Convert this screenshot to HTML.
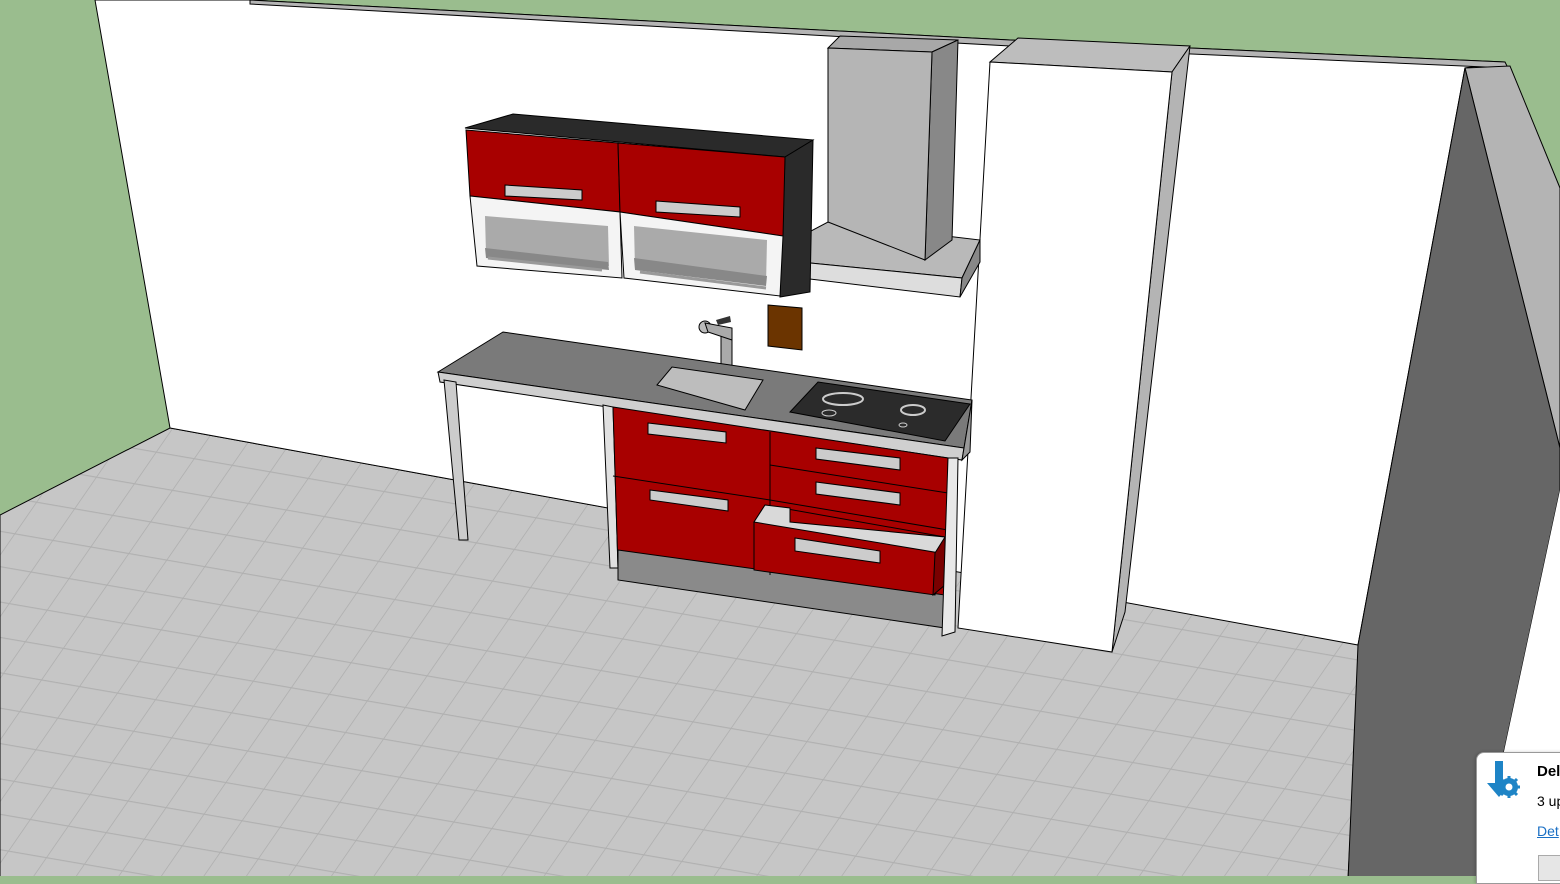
<!DOCTYPE html>
<html><head><meta charset="utf-8"><style>
html,body{margin:0;padding:0;width:1560px;height:876px;overflow:hidden;background:#9abd8e;font-family:"Liberation Sans",sans-serif}
svg{position:absolute;left:0;top:0}
.card{position:absolute;left:1476px;top:752px;width:100px;height:130px;background:#fff;border:1px solid #999;border-radius:8px 0 0 0;box-shadow:-1px 0 3px rgba(0,0,0,.2)}
</style></head><body>
<svg width="1560" height="876" viewBox="0 0 1560 876">
<defs>
<pattern id="tiles" width="42" height="32" patternUnits="userSpaceOnUse" patternTransform="skewX(-28) rotate(9)">
<rect width="42" height="32" fill="#c6c6c6"/>
<path d="M0 0H42M0 0V32" stroke="#b0b0b0" stroke-width="2" fill="none"/>
</pattern>
</defs>
<polygon points="0,515 170,428 1360,645 1348,880 0,880" fill="url(#tiles)" stroke="#000" stroke-width="1"/>
<polygon points="95,0 250,0 1010,40 1505,62 1465,68 1358,645 170,428" fill="#fff" stroke="#000" stroke-width="1"/>
<polygon points="250,0 1010,40 1505,62 1508,68 1010,46 250,4" fill="#b4b4b4" stroke="#000" stroke-width="1"/>
<polygon points="1465,68 1510,66 1560,188 1560,448" fill="#b4b4b4" stroke="#000" stroke-width="1"/>
<polygon points="1465,68 1560,448 1560,490 1500,770 1490,880 1348,880 1358,645" fill="#666" stroke="#000" stroke-width="1"/>
<polygon points="1560,490 1500,770 1490,880 1560,880" fill="#fff"/>
<!-- tall column -->
<polygon points="1018,38 1190,46 1172,72 990,62" fill="#bdbdbd" stroke="#000"/>
<polygon points="1172,72 1190,46 1125,612 1112,652" fill="#b4b4b4" stroke="#000"/>
<polygon points="990,62 1172,72 1112,652 958,628" fill="#fff" stroke="#000"/>
<!-- hood canopy -->
<polygon points="760,258 828,222 980,240 962,278" fill="#b9b9b9" stroke="#000"/>
<polygon points="760,258 962,278 960,297 760,273" fill="#ddd" stroke="#000"/>
<polygon points="962,278 980,240 980,262 960,297" fill="#888" stroke="#000"/>
<!-- chimney -->
<polygon points="840,36 958,40 932,52 828,48" fill="#a8a8a8" stroke="#000"/>
<polygon points="932,52 958,40 952,240 925,260" fill="#888" stroke="#000"/>
<polygon points="828,48 932,52 925,260 828,222" fill="#b5b5b5" stroke="#000"/>
<!-- upper cabinets -->
<polygon points="465,128 513,114 813,140 785,157" fill="#2a2a2a" stroke="#000"/>
<polygon points="785,157 813,140 810,292 780,297" fill="#2a2a2a" stroke="#000"/>
<polygon points="466,130 618,143 620,212 470,196" fill="#a80000" stroke="#000"/>
<polygon points="618,143 785,157 783,236 620,212" fill="#a80000" stroke="#000"/>
<polygon points="470,196 620,212 622,278 477,266" fill="#f4f4f4" stroke="#000"/>
<polygon points="620,212 783,236 780,296 624,278" fill="#f4f4f4" stroke="#000"/>
<polygon points="485,216 608,226 609,266 486,254" fill="#aaa"/>
<polygon points="634,226 767,240 766,285 635,268" fill="#aaa"/>
<polygon points="485,248 608,262 609,270 486,258" fill="#888"/>
<polygon points="634,258 767,276 766,286 635,270" fill="#888"/>
<polygon points="505,185 582,190 582,200 505,196" fill="#ccc" stroke="#000"/>
<polygon points="656,201 740,207 740,217 656,212" fill="#ccc" stroke="#000"/>
<line x1="488" y1="258" x2="602" y2="270" stroke="#999" stroke-width="3"/>
<line x1="640" y1="272" x2="766" y2="288" stroke="#999" stroke-width="3"/>
<polygon points="768,305 802,308 802,350 768,346" fill="#6b3400" stroke="#000"/>
<!-- faucet -->
<rect x="721" y="330" width="11" height="42" fill="#aaa" stroke="#000"/>
<circle cx="705" cy="327" r="6" fill="#bbb" stroke="#000"/>
<polygon points="705,323 732,328 732,340 708,332" fill="#aaa" stroke="#000"/>
<polygon points="716,320 730,316 731,322 718,325" fill="#333"/>
<!-- counter -->
<polygon points="438,372 503,332 972,400 964,448" fill="#7a7a7a" stroke="#000"/>
<polygon points="438,372 964,448 962,460 440,382" fill="#cfcfcf" stroke="#000"/>
<polygon points="964,448 972,400 970,452 962,460" fill="#999" stroke="#000"/>
<polygon points="657,385 672,367 763,380 745,410" fill="#bdbdbd" stroke="#000"/>
<polygon points="790,412 818,382 970,404 945,441" fill="#2b2b2b" stroke="#000"/>
<ellipse cx="843" cy="399" rx="20" ry="6" fill="none" stroke="#ccc" stroke-width="2"/>
<ellipse cx="913" cy="410" rx="12" ry="5" fill="none" stroke="#ccc" stroke-width="2"/>
<ellipse cx="829" cy="413" rx="7" ry="3" fill="none" stroke="#ccc"/>
<ellipse cx="903" cy="425" rx="4" ry="2" fill="none" stroke="#ccc"/>
<polygon points="444,380 456,382 468,540 459,540" fill="#ccc" stroke="#000"/>
<!-- base cabinet -->
<polygon points="603,405 613,407 618,568 610,568" fill="#e0e0e0" stroke="#000"/>
<polygon points="613,407 948,458 945,612 618,568" fill="#a80000" stroke="#000"/>
<polygon points="618,550 945,595 945,628 618,580" fill="#8a8a8a" stroke="#000"/>
<line x1="770" y1="432" x2="770" y2="575" stroke="#000"/>
<line x1="613" y1="476" x2="770" y2="500" stroke="#000"/>
<line x1="770" y1="465" x2="948" y2="493" stroke="#000"/>
<line x1="770" y1="500" x2="948" y2="530" stroke="#000"/>
<polygon points="754,522 765,505 945,537 935,595 754,570" fill="#a80000" stroke="#000"/>
<polygon points="754,522 765,505 790,508 790,522 945,537 940,553" fill="#d9d9d9" stroke="#000"/>
<polygon points="935,553 945,537 945,585 933,595" fill="#7a0000" stroke="#000"/>
<polygon points="648,423 726,432 726,443 648,434" fill="#ccc" stroke="#000"/>
<polygon points="650,490 728,500 728,511 650,500" fill="#ccc" stroke="#000"/>
<polygon points="816,448 900,458 900,470 816,459" fill="#ccc" stroke="#000"/>
<polygon points="816,482 900,493 900,505 816,494" fill="#ccc" stroke="#000"/>
<polygon points="795,538 880,551 880,563 795,551" fill="#ccc" stroke="#000"/>
<polygon points="948,458 958,458 955,632 942,636" fill="#e8e8e8" stroke="#000"/>
</svg>
<div class="card">
<svg width="50" height="50" style="left:4px;top:4px">
<path d="M14 4h8v22h8l-12 14-12-14h8z" fill="#1e84c6"/>
<circle cx="28" cy="30" r="9" fill="#1e84c6"/>
<g stroke="#1e84c6" stroke-width="3"><line x1="28" y1="19" x2="28" y2="41"/><line x1="17" y1="30" x2="39" y2="30"/><line x1="20" y1="22" x2="36" y2="38"/><line x1="36" y1="22" x2="20" y2="38"/></g>
<circle cx="28" cy="30" r="3.5" fill="#fff"/>
</svg>
<div style="position:absolute;left:60px;top:10px;font-weight:bold;font-size:15px">Del</div>
<div style="position:absolute;left:60px;top:40px;font-size:14px">3 up</div>
<div style="position:absolute;left:60px;top:70px;font-size:14px;color:#1a6fc4;text-decoration:underline">Det</div>
<div style="position:absolute;left:61px;top:102px;width:40px;height:24px;background:#e6e6e6;border:1px solid #aaa"></div>
</div>
</body></html>
